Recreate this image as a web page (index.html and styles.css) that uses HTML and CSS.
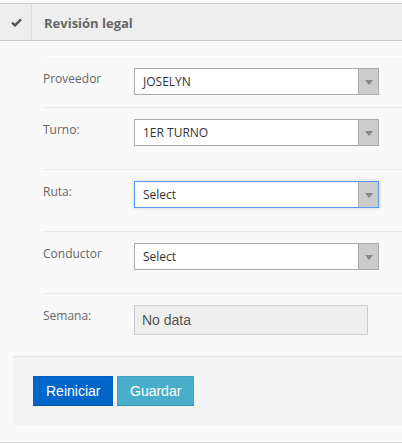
FILE: index.html
```html
<!DOCTYPE html>
<html>
<head>
<meta charset="utf-8">
<link rel="stylesheet" href="styles.css">
</head>
<body>
<div class="panel">
  <div class="header">
    <div class="icon-cell">
      <svg class="check" width="11" height="9" viewBox="0 0 11 9"><path d="M1 4.6 L4 7.4 L10 1.3" fill="none" stroke="#555" stroke-width="2.4"/></svg>
    </div>
    <div class="title">Revisión legal</div>
  </div>
  <div class="body">
    <div class="rows">
      <div class="row first">
        <label class="lbl">Proveedor</label>
        <div class="select"><span class="val">JOSELYN</span><span class="arrow"><i class="tri"></i></span></div>
      </div>
      <div class="row">
        <label class="lbl">Turno:</label>
        <div class="select"><span class="val">1ER TURNO</span><span class="arrow"><i class="tri"></i></span></div>
      </div>
      <div class="row">
        <label class="lbl">Ruta:</label>
        <div class="select focus"><span class="val">Select</span><span class="arrow"><i class="tri"></i></span></div>
      </div>
      <div class="row">
        <label class="lbl">Conductor</label>
        <div class="select"><span class="val">Select</span><span class="arrow"><i class="tri"></i></span></div>
      </div>
      <div class="row last">
        <label class="lbl">Semana:</label>
        <div class="input">No data</div>
      </div>
    </div>
    <div class="footer">
      <button class="btn primary">Reiniciar</button>
      <button class="btn info">Guardar</button>
    </div>
  </div>
</div>
</body>
</html>
```
FILE: styles.css
```css
html, body {
  margin: 0;
  padding: 0;
  background: #fafafa;
  font-family: "Open Sans", "Liberation Sans", sans-serif;
}
.panel {
  margin-top: 3px;
  border-top: 1px solid #cfcfcf;
  border-bottom: 1px solid #cfcfcf;
  height: 438px;
  display: flex;
  flex-direction: column;
  background: #f9f9f9;
}
.header {
  height: 36px;
  background: #eeeeee;
  border-bottom: 1px solid #cfcfcf;
  display: flex;
  align-items: stretch;
}
.icon-cell {
  width: 31px;
  border-right: 1px solid #dcdcdc;
  display: flex;
  align-items: center;
  justify-content: center;
}
.check { margin-top: 1px; margin-left: 1px; }
.title {
  padding-left: 12px;
  font-size: 13px;
  font-weight: 700;
  color: #666;
  display: flex;
  align-items: center;
  padding-top: 1px;
}
.body {
  flex: 1;
  padding-left: 13px;
  padding-top: 15px;
  display: flex;
  flex-direction: column;
}
.rows {
  padding-left: 30px;
}
.row {
  display: flex;
  align-items: flex-start;
  border-top: 1px solid #ebebeb;
  padding: 10px 0 23px;
}
.row.first {
  border-top-color: #ffffff;
  padding-bottom: 12px;
}
.row.last { padding-bottom: 21px; }
.lbl {
  width: 91px;
  font-size: 12px;
  color: #666;
  line-height: 17px;
  padding-top: 3px;
}
.select {
  width: 245px;
  height: 27px;
  box-sizing: border-box;
  border: 1px solid #aaaaaa;
  background: #fff;
  display: flex;
  align-items: stretch;
  margin-top: 1px;
}
.select.focus {
  border-color: #5897fb;
  box-shadow: 0 0 4px rgba(0,0,0,0.15);
}
.val {
  flex: 1;
  padding-left: 8px;
  font-size: 12px;
  color: #333;
  line-height: 25px;
}
.arrow {
  width: 19px;
  background: #cccccc;
  border-left: 1px solid #aaaaaa;
  display: flex;
  align-items: center;
  justify-content: center;
}
.tri {
  width: 0;
  height: 0;
  border-left: 4px solid transparent;
  border-right: 4px solid transparent;
  border-top: 5px solid #888;
  margin-top: 1px;
}
.input {
  width: 234px;
  height: 30px;
  box-sizing: border-box;
  margin-top: 1px;
  border: 1px solid #cccccc;
  background: #eeeeee;
  font-family: "Liberation Sans", Arial, sans-serif;
  font-size: 14px;
  color: #555;
  line-height: 28px;
  padding-left: 7px;
}
.footer {
  background: #f4f4f4;
  border-top: 1px solid #e6e6e6;
  height: 69px;
  padding: 19px 0 0 20px;
  box-sizing: border-box;
  display: flex;
  gap: 4px;
  align-items: flex-start;
}
.btn {
  height: 30px;
  font-family: "Liberation Sans", Arial, sans-serif;
  font-size: 14px;
  color: #fff;
  border: 1px solid transparent;
  padding: 0 12px;
  margin: 0;
  cursor: pointer;
}
.btn.primary {
  width: 80px;
  background: #0067c9;
  border-color: #0060bd;
  border-bottom-color: #00509e;
}
.btn.info {
  width: 77px;
  background: #4aadc9;
  border-color: #43a3bd;
  border-bottom-color: #3b8fa8;
}
```
